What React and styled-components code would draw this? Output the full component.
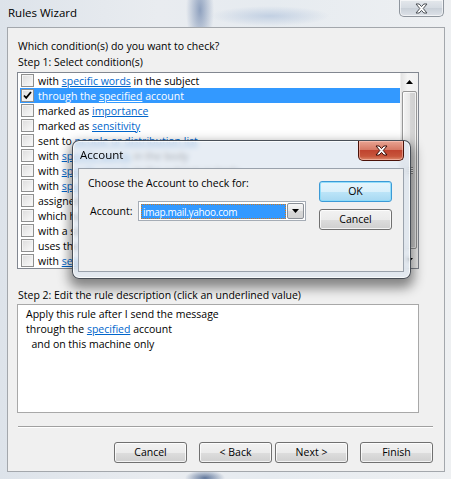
import React from 'react'
import styled, { createGlobalStyle, css } from 'styled-components'

const GlobalStyle = createGlobalStyle`
  html, body { margin:0; padding:0; }
  body {
    width:451px;
    height:479px;
    overflow:hidden;
    font-family: "Open Sans", "Noto Sans", sans-serif;
    font-size:10.5px;
    color:#000;
  }
`

const conditions = [
  ['with ', { l: 'specific words' }, ' in the subject'],
  ['through the ', { l: 'specified' }, ' account'],
  ['marked as ', { l: 'importance' }],
  ['marked as ', { l: 'sensitivity' }],
  ['sent to ', { l: 'people or distribution list' }],
  ['with ', { l: 'specific words' }, ' in the body'],
  ['with ', { l: 'specific words' }, ' in the subject or body'],
  ['with ', { l: 'specific words' }, " in the recipient's address"],
  ['assigned to ', { l: 'category' }, ' category'],
  ['which has an attachment'],
  ['with a size ', { l: 'in a specific range' }],
  ['uses the ', { l: 'form name' }, ' form'],
  ['with ', { l: 'selected properties' }, ' of documents or forms'],
]

function XGlyph({ fill = '#fff', stroke = '#4a4f55' }) {
  return (
    <svg width="13" height="11" viewBox="0 0 13 11">
      <path
        d="M1 1h3.2l2.3 2.6L8.8 1H12L8.2 5.5 12 10H8.8L6.5 7.4 4.2 10H1l3.8-4.5z"
        fill={fill}
        stroke={stroke}
        strokeWidth="1"
        strokeLinejoin="round"
      />
    </svg>
  )
}

function Arrow({ down }) {
  return (
    <svg width="7" height="4" viewBox="0 0 7 4">
      <path d={down ? 'M0 0h7L3.5 4z' : 'M0 4h7L3.5 0z'} fill="#000" />
    </svg>
  )
}

function Check() {
  return (
    <svg width="9" height="9" viewBox="0 0 9 9">
      <path d="M1 4.5l2.2 2.3L8 1" fill="none" stroke="#000" strokeWidth="1.8" />
    </svg>
  )
}

export default function App() {
  return (
    <>
      <GlobalStyle />
      <Window>
        <TitleBar>
          <Title>Rules Wizard</Title>
          <CloseBtn><XGlyph /></CloseBtn>
        </TitleBar>
        <Client>
          <Label>Which condition(s) do you want to check?</Label>
          <Label>Step 1: Select condition(s)</Label>
          <ListBox>
            <Rows>
              {conditions.map((parts, i) => {
                const sel = i === 1
                return (
                  <Row key={i} $selected={sel}>
                    <Box>{sel && <Check />}</Box>
                    <span>
                      {parts.map((p, j) =>
                        typeof p === 'string' ? p : <Link key={j} $selected={sel}>{p.l}</Link>
                      )}
                    </span>
                  </Row>
                )
              })}
            </Rows>
            <ScrollBar>
              <ScrollBtn><Arrow /></ScrollBtn>
              <Thumb><Grip /></Thumb>
              <ScrollBtn><Arrow down /></ScrollBtn>
            </ScrollBar>
          </ListBox>
          <Label $top={18}>Step 2: Edit the rule description (click an underlined value)</Label>
          <DescBox>
            <div>Apply this rule after I send the message</div>
            <div>through the <Link>specified</Link> account</div>
            <div>&nbsp; and on this machine only</div>
          </DescBox>
          <Separator />
          <ButtonRow>
            <Button>Cancel</Button>
            <Button $gap={12}>&lt; Back</Button>
            <Button $gap={3}>Next &gt;</Button>
            <Button $gap={12}>Finish</Button>
          </ButtonRow>
        </Client>

        <Dialog>
          <DialogTitleBar>
            <DialogTitle>Account</DialogTitle>
            <RedClose><XGlyph stroke="#3a0c06" /></RedClose>
          </DialogTitleBar>
          <DialogClient>
            <DialogLeft>
              <Label>Choose the Account to check for:</Label>
              <ComboRow>
                <span>Account:</span>
                <Combo>
                  <ComboValue>imap.mail.yahoo.com</ComboValue>
                  <ComboBtn><Arrow down /></ComboBtn>
                </Combo>
              </ComboRow>
            </DialogLeft>
            <DialogButtons>
              <Button $default>OK</Button>
              <Button>Cancel</Button>
            </DialogButtons>
          </DialogClient>
        </Dialog>
      </Window>
    </>
  )
}

const Window = styled.div`
  position: relative;
  width: 451px;
  height: 479px;
  display: flex;
  flex-direction: column;
  box-sizing: border-box;
  padding: 0 6px 7px 7px;
  background:
    radial-gradient(ellipse 14px 40px at 200px 10px, rgba(70,100,150,0.55), transparent),
    radial-gradient(ellipse 60px 10px at 270px 16px, rgba(150,175,210,0.45), transparent),
    radial-gradient(ellipse 20px 8px at 205px 478px, rgba(40,70,120,0.7), transparent),
    linear-gradient(to right, #dde3ea 0%, #e9ecf0 35%, #e6ebf0 60%, #eef0f2 100%);
`

const TitleBar = styled.div`
  height: 27px;
  display: flex;
  align-items: flex-start;
  justify-content: space-between;
`

const Title = styled.div`
  font-size: 11.5px;
  line-height: 16px;
  padding-top: 5px;
  padding-left: 1px;
  color: #000;
`

const CloseBtn = styled.div`
  width: 45px;
  height: 17px;
  margin-right: 1px;
  box-sizing: border-box;
  border: 1px solid #8e959d;
  border-top: none;
  border-radius: 0 0 5px 5px;
  background: linear-gradient(#e4e8ec, #d5dbe2 50%, #c9d0d8 51%, #dde2e8);
  box-shadow: inset 0 0 0 1px rgba(255,255,255,0.6);
  display: flex;
  align-items: center;
  justify-content: center;
`

const Client = styled.div`
  flex: 1;
  background: #f0f0f0;
  border: 1px solid #a3a7ac;
  padding: 10px 11px 0 9px;
  display: flex;
  flex-direction: column;
  align-items: flex-start;
`

const Label = styled.div`
  line-height: 16px;
  padding-left: 1px;
  white-space: nowrap;
  margin-top: ${p => p.$top || 0}px;
`

const ListBox = styled.div`
  margin-top: 2px;
  width: 402px;
  height: 197px;
  box-sizing: border-box;
  border: 1px solid #828790;
  background: #fff;
  display: flex;
`

const Rows = styled.div`
  flex: 1;
  padding-left: 2px;
  overflow: hidden;
`

const Row = styled.div`
  height: 15px;
  display: flex;
  align-items: center;
  gap: 4px;
  padding-left: 1px;
  white-space: nowrap;
  ${p => p.$selected && css`
    background: #3399ff;
    color: #fff;
  `}
`

const Box = styled.div`
  width: 13px;
  height: 13px;
  box-sizing: border-box;
  border: 1px solid #8e8f8f;
  background: linear-gradient(135deg, #dcdcdc, #fbfbfb);
  box-shadow: inset 0 0 0 1px #f4f4f4;
  display: flex;
  align-items: center;
  justify-content: center;
  flex: none;
`

const Link = styled.span`
  color: ${p => (p.$selected ? '#fff' : '#0066cc')};
  text-decoration: underline;
`

const ScrollBar = styled.div`
  width: 17px;
  display: flex;
  flex-direction: column;
  background: linear-gradient(to right, #e3e3e3, #f5f5f5 40%, #f0f0f0);
  border-left: 1px solid #f0f0f0;
`

const ScrollBtn = styled.div`
  height: 17px;
  display: flex;
  align-items: center;
  justify-content: center;
`

const Thumb = styled.div`
  flex: 1;
  margin: 1px 1px 2px;
  border: 1px solid #979797;
  border-radius: 2px;
  background: linear-gradient(to right, #f4f4f4, #e8e8e8 50%, #d6d6d6 51%, #cfcfcf);
  box-shadow: inset 0 0 0 1px rgba(255,255,255,0.7);
  display: flex;
  align-items: center;
  justify-content: center;
`

const Grip = styled.div`
  width: 7px;
  height: 7px;
  background: repeating-linear-gradient(#8a8a8a 0 1px, #f5f5f5 1px 2px);
`

const DescBox = styled.div`
  margin-top: 1px;
  width: 402px;
  height: 109px;
  box-sizing: border-box;
  border: 1px solid #a8a8a8;
  background: #fff;
  padding: 2px 8px;
  line-height: 15px;
`

const Separator = styled.div`
  margin: 13px 0 0 1px;
  width: 415px;
  height: 2px;
  border-top: 1px solid #a0a0a0;
  border-bottom: 1px solid #fff;
  box-sizing: border-box;
`

const ButtonRow = styled.div`
  margin-top: 14px;
  align-self: stretch;
  display: flex;
  justify-content: flex-end;
`

const Button = styled.div`
  width: 73px;
  height: 21px;
  box-sizing: border-box;
  margin-left: ${p => p.$gap || 0}px;
  border: 1px solid ${p => (p.$default ? '#3c9ad6' : '#707070')};
  border-radius: 3px;
  background: ${p =>
    p.$default
      ? 'linear-gradient(#e6f5fc, #d9f0fb 50%, #bde5f8 51%, #a7d8f2)'
      : 'linear-gradient(#f2f2f2, #ebebeb 50%, #dddddd 51%, #cfcfcf)'};
  box-shadow: inset 0 0 0 1px ${p => (p.$default ? 'rgba(140,220,250,0.9)' : 'rgba(255,255,255,0.75)')};
  display: flex;
  align-items: center;
  justify-content: center;
  line-height: 1;
`

const Dialog = styled.div`
  position: absolute;
  left: 72px;
  top: 140px;
  width: 339px;
  height: 139px;
  box-sizing: border-box;
  border: 1px solid rgba(20,25,35,0.75);
  border-radius: 7px;
  padding: 0 6px 6px 5px;
  display: flex;
  flex-direction: column;
  background: rgba(222,230,240,0.72);
  backdrop-filter: blur(2.5px);
  box-shadow: inset 0 0 0 1px rgba(255,255,255,0.75), 0 6px 12px 3px rgba(0,0,0,0.45);
`

const DialogTitleBar = styled.div`
  height: 27px;
  display: flex;
  align-items: flex-start;
  justify-content: space-between;
`

const DialogTitle = styled.div`
  font-size: 11.5px;
  line-height: 16px;
  padding: 6px 0 0 2px;
`

const RedClose = styled.div`
  width: 46px;
  height: 20px;
  box-sizing: border-box;
  border: 1px solid #4a1208;
  border-top: none;
  border-radius: 0 0 5px 5px;
  background: linear-gradient(#e8a493, #d67a66 45%, #c0442f 50%, #c7553b 80%, #dd8a6c);
  box-shadow: inset 0 0 0 1px rgba(255,210,200,0.5);
  display: flex;
  align-items: center;
  justify-content: center;
`

const DialogClient = styled.div`
  flex: 1;
  background: #f0f0f0;
  border: 1px solid #9aa2ac;
  display: flex;
`

const DialogLeft = styled.div`
  flex: 1;
  padding: 6px 0 0 8px;
`

const ComboRow = styled.div`
  margin-top: 10px;
  display: flex;
  align-items: center;
  padding-left: 3px;
  span { width: 48px; }
`

const Combo = styled.div`
  width: 168px;
  height: 20px;
  box-sizing: border-box;
  border: 1px solid #a5acb5;
  background: #fff;
  padding: 2px 1px 1px 2px;
  display: flex;
  gap: 1px;
`

const ComboValue = styled.div`
  flex: 1;
  background: #3399ff;
  color: #fff;
  outline: 1px dotted #d0781f;
  outline-offset: -1px;
  padding-left: 2px;
  display: flex;
  align-items: center;
  font-size: 10px;
  letter-spacing: -0.3px;
`

const ComboBtn = styled.div`
  width: 17px;
  margin-top: -1px;
  box-sizing: border-box;
  border: 1px solid #8a8f96;
  border-radius: 2px;
  background: linear-gradient(#f6f6f6, #e6e6e6 50%, #d8d8d8 51%, #d2d2d2);
  display: flex;
  align-items: center;
  justify-content: center;
`

const DialogButtons = styled.div`
  padding: 12px 11px 0 0;
  display: flex;
  flex-direction: column;
  gap: 7px;
`
